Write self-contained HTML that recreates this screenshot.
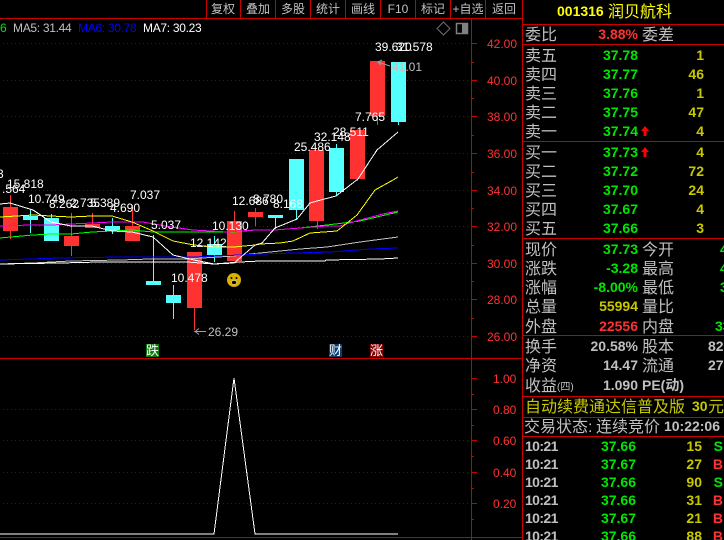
<!DOCTYPE html>
<html><head><meta charset="utf-8"><style>
html,body{margin:0;padding:0;background:#000;width:724px;height:540px;overflow:hidden}
svg{display:block}
text{font-family:"Liberation Sans","WenQuanYi Zen Hei","Noto Sans CJK SC",sans-serif}
.w{fill:#fff;font-size:12px}
.ax{fill:#ff3232;font-size:12px}
.tb{fill:#c0c0c0;font-size:12px;text-anchor:middle}
.l{fill:#c0c0c0;font-size:16px}
.n{font-weight:bold;font-size:14px;text-anchor:end}
.g{fill:#00e600}.y{fill:#c8c800}.r{fill:#ff3232}.s{fill:#c0c0c0}
.m{fill:none;shape-rendering:crispEdges;stroke-width:1}
.ma{font-size:12px;letter-spacing:-.3px}
</style></head><body>
<svg width="724" height="540" viewBox="0 0 724 540" xmlns="http://www.w3.org/2000/svg">
<rect width="724" height="540" fill="#000"/>
<g stroke="#800000" stroke-dasharray="1 3" shape-rendering="crispEdges">
<path d="M3 43.5H471M3 80.5H471M3 116.5H471M3 153.5H471M3 190.5H471M3 226.5H471M3 263.5H471M3 299.5H471M3 336.5H471M3 409.5H471M3 440.5H471M3 472.5H471M3 503.5H471"/>
</g>
<g stroke="#c80000" fill="none" shape-rendering="crispEdges">
<path d="M0 18.5H522M0 358.5H522M0 537.5H522M471.5 18V540M522.5 0V540"/>
<path d="M206.5 0V18M240.5 0V18M275.5 0V18M310.5 0V18M345.5 0V18M380.5 0V18M415.5 0V18M450.5 0V18M485.5 0V18"/>
<path d="M522 24.5H724M522 44.5H724M522 141.5H724M522 238.5H724M522 335.5H724M522 396.5H724M522 417.5H724M522 436.5H724"/>
<path d="M471 43.5H477M471 80.5H477M471 116.5H477M471 153.5H477M471 190.5H477M471 226.5H477M471 263.5H477M471 299.5H477M471 336.5H477M471 378.5H477M471 409.5H477M471 440.5H477M471 472.5H477M471 503.5H477"/>
<path d="M471 62.5H474M471 98.5H474M471 135.5H474M471 172.5H474M471 208.5H474M471 245.5H474M471 281.5H474M471 318.5H474M471 394.5H474M471 425.5H474M471 456.5H474M471 488.5H474M471 519.5H474"/>
</g>
<g class="tb">
<text x="223" y="13" class="tb">复权</text><text x="258" y="13" class="tb">叠加</text><text x="293" y="13" class="tb">多股</text><text x="328" y="13" class="tb">统计</text><text x="363" y="13" class="tb">画线</text><text x="398" y="13" class="tb">F10</text><text x="433" y="13" class="tb">标记</text><text x="468" y="13" class="tb">+自选</text><text x="504" y="13" class="tb">返回</text>
</g>
<text x="0" y="32" font-size="12" fill="#00e600">6</text>
<text x="13" y="32" class="ma" fill="#c0c0c0">MA5: 31.44</text>
<text x="78" y="32" class="ma" fill="#0000ff">MA6: 30.78</text>
<text x="143" y="32" class="ma" fill="#fff">MA7: 30.23</text>
<path d="M443.500 22L450 28.500L443.500 35L437 28.500Z" fill="none" stroke="#707070"/>
<rect x="456.500" y="23.500" width="11" height="10" fill="#000" stroke="#808080" stroke-width="1.500"/><rect x="462" y="24" width="5" height="9" fill="#808080"/>
<g shape-rendering="crispEdges">
<g stroke="#ff3232">
<path d="M10.500 195V239M71.500 213V256M92.500 213V228M132.500 205V241M194.500 308V330M234.500 211V261M255.500 208V226M317.500 221V229M357.500 179V181M377.500 116V125"/>
</g>
<g stroke="#54ffff">
<path d="M30.500 209V233M51.500 214V241M112.500 218V234M153.500 235V281M173.500 285V319M214.500 236V262M275.500 218V229M296.500 210V220M336.500 144V195M398.500 122V125"/>
</g>
<g fill="#ff3232">
<rect x="3" y="207" width="15" height="24"/><rect x="64" y="236" width="15" height="10"/><rect x="85" y="224" width="15" height="4"/><rect x="125" y="226" width="15" height="15"/><rect x="187" y="252" width="15" height="56"/><rect x="227" y="221" width="15" height="40"/><rect x="248" y="212" width="15" height="5"/><rect x="309" y="150" width="15" height="71"/><rect x="350" y="130" width="15" height="49"/><rect x="370" y="61" width="15" height="55"/>
</g>
<g fill="#54ffff">
<rect x="23" y="216" width="15" height="4"/><rect x="44" y="218" width="15" height="23"/><rect x="105" y="226" width="15" height="5"/><rect x="146" y="281" width="15" height="4"/><rect x="166" y="295" width="15" height="8"/><rect x="207" y="244" width="15" height="11"/><rect x="268" y="215" width="15" height="3"/><rect x="289" y="159" width="15" height="51"/><rect x="329" y="148" width="15" height="44"/><rect x="391" y="62" width="15" height="60"/>
</g>
</g>
<polyline class="m" stroke="#c0c0c0" points="0,264 33,263 70,261 120,260 150,259 187,259 234,256 260,253 300,249 327,247 360,242 398,237"/>
<polyline class="m" stroke="#0000ff" points="0,260 60,258 120,257 194,257 240,255 260,254 330,252 370,249 398,248"/>
<polyline class="m" stroke="#fff" points="0,264 60,263 100,262 187,262 200,263 214,264 240,262 260,261 325,261 326,260 380,259 398,258"/>
<polyline class="m" stroke="#00ff00" points="0,238 33,235 51,234 71,234 92,232 112,231 132,230 153,232 194,232 234,232 255,230 275,230 300,228 327,225 360,221 398,212"/>
<polyline class="m" stroke="#ff00ff" points="0,226 30,225 51,225 71,224 92,223 112,222 143,222 165,226 193,230 227,232 255,230 275,230 300,228 327,226 340,226 360,220 383,214 398,211"/>
<polyline class="m" stroke="#ffff00" points="0,217 33,215 51,216 71,217 92,216 112,216 132,222 153,231 173,241 194,245 214,247 234,247 255,245 260,244 280,243 293,241 310,233 337,231 357,215 375,190 393,180 398,177"/>
<polyline class="m" stroke="#fff" points="0,204 10,203 33,210 51,222 71,226 92,226 112,231 132,232 153,237 173,255 194,260 214,264 234,263 255,245 262,243 275,228 297,219 310,203 317,201 336,196 358,179 377,150 398,132"/>
<polyline class="m" stroke="#fff" points="0,534 214,534 234,378 255,534 398,534"/>
<circle cx="234" cy="280" r="7" fill="#d8b000"/><circle cx="231.500" cy="278" r="1" fill="#000"/><circle cx="236.500" cy="278" r="1" fill="#000"/><ellipse cx="234" cy="282.500" rx="2.500" ry="2" fill="#000" stroke="#fff" stroke-width=".5"/>
<g fill="none" stroke="#a0a0a0"><path d="M206 331.500H195l4-3M195 331.500l4 3"/><path d="M390 66L378 62l4-2M378 62l3 3"/></g>
<g class="w">
<text class="w" x="-3" y="178">3</text><text class="w" x="2" y="193">.564</text><text class="w" x="7" y="188">15.818</text><text class="w" x="28" y="203">10.749</text><text class="w" x="49" y="208">8.262</text><text class="w" x="70" y="207">2.735</text><text class="w" x="90" y="207">5.389</text><text class="w" x="110" y="212">4.690</text><text class="w" x="130" y="199">7.037</text><text class="w" x="151" y="229">5.037</text><text class="w" x="190" y="247">12.142</text><text class="w" x="212" y="230">10.130</text><text class="w" x="171" y="282">10.478</text><text class="w" x="232" y="205">12.686</text><text class="w" x="253" y="203">8.780</text><text class="w" x="273" y="208">8.168</text><text class="w" x="294" y="151">25.486</text><text class="w" x="314" y="141">32.148</text><text class="w" x="333" y="136">28.511</text><text class="w" x="355" y="121">7.765</text><text class="w" x="375" y="51">39.620</text><text class="w" x="396" y="51">31.578</text>
</g>
<text x="208" y="336" font-size="12" fill="#c0c0c0">26.29</text>
<text x="392" y="71" font-size="12" fill="#c0c0c0">41.01</text>
<g class="ax">
<text class="ax" x="487" y="48">42.00</text><text class="ax" x="487" y="85">40.00</text><text class="ax" x="487" y="121">38.00</text><text class="ax" x="487" y="158">36.00</text><text class="ax" x="487" y="195">34.00</text><text class="ax" x="487" y="231">32.00</text><text class="ax" x="487" y="268">30.00</text><text class="ax" x="487" y="304">28.00</text><text class="ax" x="487" y="341">26.00</text>
<text class="ax" x="493" y="383">1.00</text><text class="ax" x="493" y="414">0.80</text><text class="ax" x="493" y="445">0.60</text><text class="ax" x="493" y="477">0.40</text><text class="ax" x="493" y="508">0.20</text>
</g>
<rect x="146" y="344" width="13" height="13" fill="#0a7a0a"/><text x="146" y="355" font-size="13" fill="#fff">跌</text>
<rect x="329" y="344" width="13" height="13" fill="#0a3c6e"/><text x="329" y="355" font-size="13" fill="#fff">财</text>
<rect x="370" y="344" width="13" height="13" fill="#800000"/><text x="370" y="355" font-size="13" fill="#fff">涨</text>

<text x="557" y="16" font-size="14" font-weight="bold" fill="#ffff00">001316</text>
<text x="608" y="17" font-size="16" fill="#ffff00">润贝航科</text>
<text class="l" x="525" y="40">委比</text><text class="n r" x="638" y="39">3.88%</text><text class="l" x="642" y="40">委差</text>

<text class="l" x="525" y="61">卖五</text><text class="l" x="525" y="80">卖四</text><text class="l" x="525" y="99">卖三</text><text class="l" x="525" y="118">卖二</text><text class="l" x="525" y="137">卖一</text>
<text class="l" x="525" y="158">买一</text><text class="l" x="525" y="177">买二</text><text class="l" x="525" y="196">买三</text><text class="l" x="525" y="215">买四</text><text class="l" x="525" y="234">买五</text>
<text class="n g" x="638" y="60">37.78</text><text class="n g" x="638" y="79">37.77</text><text class="n g" x="638" y="98">37.76</text><text class="n g" x="638" y="117">37.75</text><text class="n g" x="638" y="136">37.74</text>
<text class="n g" x="638" y="157">37.73</text><text class="n g" x="638" y="176">37.72</text><text class="n g" x="638" y="195">37.70</text><text class="n g" x="638" y="214">37.67</text><text class="n g" x="638" y="233">37.66</text>
<text class="n y" x="704" y="60">1</text><text class="n y" x="704" y="79">46</text><text class="n y" x="704" y="98">1</text><text class="n y" x="704" y="117">47</text><text class="n y" x="704" y="136">4</text>
<text class="n y" x="704" y="157">4</text><text class="n y" x="704" y="176">72</text><text class="n y" x="704" y="195">24</text><text class="n y" x="704" y="214">4</text><text class="n y" x="704" y="233">3</text>
<path d="M645 126l4 5h-2.500v5h-3v-5H641zM645 147l4 5h-2.500v5h-3v-5H641z" fill="#f00"/>

<text class="l" x="525" y="255">现价</text><text class="l" x="525" y="274">涨跌</text><text class="l" x="525" y="293">涨幅</text><text class="l" x="525" y="312">总量</text><text class="l" x="525" y="332">外盘</text>
<text class="l" x="642" y="255">今开</text><text class="l" x="642" y="274">最高</text><text class="l" x="642" y="293">最低</text><text class="l" x="642" y="312">量比</text><text class="l" x="642" y="332">内盘</text>
<text class="n g" x="638" y="254">37.73</text><text class="n g" x="638" y="273">-3.28</text><text class="n g" x="638" y="292">-8.00%</text><text class="n y" x="638" y="311">55994</text><text class="n r" x="638" y="331">22556</text>
<text x="720" y="254" font-size="14" font-weight="bold" fill="#00e600">4</text><text x="720" y="273" font-size="14" font-weight="bold" fill="#00e600">4</text><text x="720" y="292" font-size="14" font-weight="bold" fill="#00e600">3</text><text x="715" y="331" font-size="14" font-weight="bold" fill="#00e600">33</text>

<text class="l" x="525" y="352">换手</text><text class="l" x="642" y="352">股本</text><text class="l" x="525" y="371">净资</text><text class="l" x="642" y="371">流通</text><text class="l" x="525" y="391">收益</text><text x="557" y="390" font-size="10" fill="#c0c0c0">(四)</text>
<text class="n s" x="638" y="351">20.58%</text><text class="n s" x="638" y="370">14.47</text><text class="n s" x="638" y="390">1.090</text>
<text x="642" y="390" font-size="14" font-weight="bold" fill="#c0c0c0">PE(动)</text>
<text x="708" y="351" font-size="14" font-weight="bold" fill="#c0c0c0">82</text><text x="708" y="370" font-size="14" font-weight="bold" fill="#c0c0c0">27</text>

<text x="525" y="412" font-size="16" fill="#c8c800">自动续费通达信普及版</text>
<text x="692" y="411" font-size="14" font-weight="bold" fill="#c8c800">30</text><text x="708" y="412" font-size="16" fill="#c8c800">元</text>
<text class="l" x="524" y="432">交易状态:</text><text class="l" x="596" y="432">连续竞价</text>
<text class="n s" x="720" y="431">10:22:06</text>

<g font-size="14" font-weight="bold" fill="#c0c0c0" letter-spacing="-.6">
<text x="525" y="451">10:21</text><text x="525" y="469">10:21</text><text x="525" y="487">10:21</text><text x="525" y="505">10:21</text><text x="525" y="523">10:21</text><text x="525" y="541">10:21</text>
</g>
<text class="n g" x="636" y="451">37.66</text><text class="n g" x="636" y="469">37.67</text><text class="n g" x="636" y="487">37.66</text><text class="n g" x="636" y="505">37.66</text><text class="n g" x="636" y="523">37.67</text><text class="n g" x="636" y="541">37.66</text>
<text class="n y" x="702" y="451">15</text><text class="n y" x="702" y="469">27</text><text class="n y" x="702" y="487">90</text><text class="n y" x="702" y="505">31</text><text class="n y" x="702" y="523">21</text><text class="n y" x="702" y="541">88</text>
<text class="n g" x="723" y="451">S</text><text class="n r" x="723" y="469">B</text><text class="n g" x="723" y="487">S</text><text class="n r" x="723" y="505">B</text><text class="n r" x="723" y="523">B</text><text class="n r" x="723" y="541">B</text>
</svg>
</body></html>
